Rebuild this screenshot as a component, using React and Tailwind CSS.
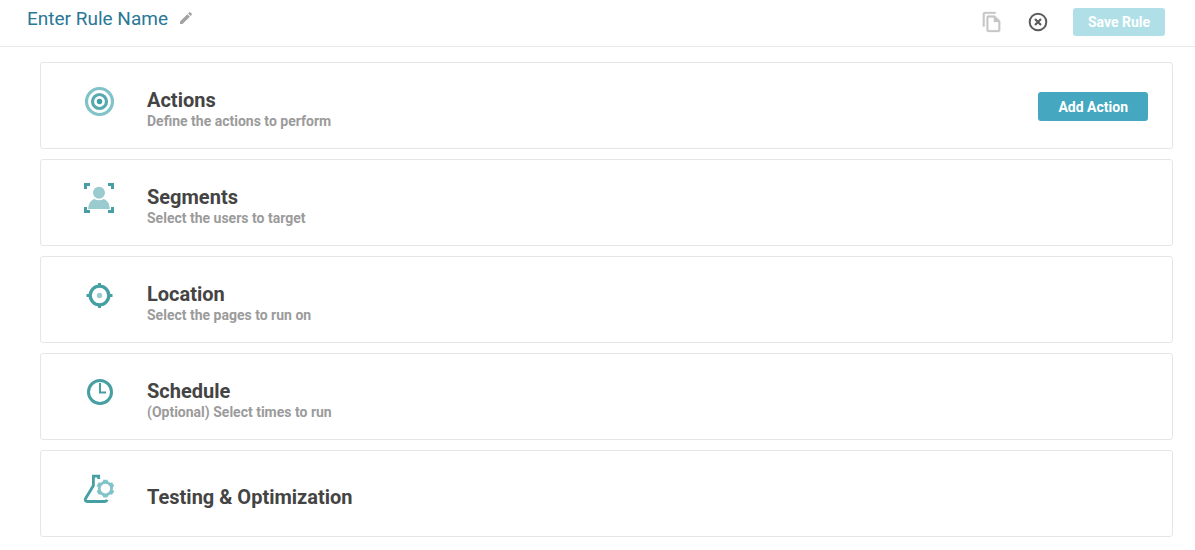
import React from "react";

function TargetIcon() {
  return (
    <svg width="32" height="32" viewBox="0 0 32 32" fill="none" aria-hidden="true">
      <circle cx="16.5" cy="15.5" r="13" stroke="#80c3c8" strokeWidth="3.2" />
      <circle cx="16.5" cy="15.5" r="7" stroke="#58aaaf" strokeWidth="3.2" />
      <circle cx="16.5" cy="15.5" r="2.7" fill="#3f9fa5" />
    </svg>
  );
}

function SegmentsIcon() {
  return (
    <svg width="32" height="32" viewBox="0 1 32 32" fill="none" aria-hidden="true">
      <path
        d="M1 1h6v3H4v3H1zM25 1h6v6h-3V4h-3zM1 25h3v3h3v3H1zM28 25h3v6h-6v-3h3z"
        fill="#459fa3"
      />
      <circle cx="16" cy="10.8" r="6" fill="#99cbcf" />
      <path d="M5.2 27c.3-6 2.800-8.900 6-10.100 3 1.800 6.600 1.800 9.600 0 3.200 1.200 5.700 4.100 6 10.100z" fill="#99cbcf" />
    </svg>
  );
}

function LocationIcon() {
  return (
    <svg width="32" height="32" viewBox="0 1 32 32" fill="none" aria-hidden="true">
      <circle cx="16.5" cy="16.5" r="9.300" stroke="#459fa3" strokeWidth="3.300" />
      <path d="M15 4h3v4h-3zM15 25h3v4h-3zM3.500 15h4v3h-4zM25.500 15h4v3h-4z" fill="#459fa3" />
      <circle cx="16.500" cy="16.500" r="2.700" fill="#99cbcf" />
    </svg>
  );
}

function ClockIcon() {
  return (
    <svg width="32" height="32" viewBox="0 1 32 32" fill="none" aria-hidden="true">
      <circle cx="17" cy="16" r="11.500" stroke="#459fa3" strokeWidth="3" />
      <path d="M17 7v9.500h6" stroke="#459fa3" strokeWidth="2" />
    </svg>
  );
}

function Gear() {
  return (
    <g fill="#80c3c8">
      <circle cx="22.400" cy="15.600" r="6.200" fill="none" stroke="#80c3c8" strokeWidth="2.700" />
      <path d="M19.700 9.600l.6-2.900h4.200l.6 2.900z" />
      <path d="M19.700 9.600l.6-2.900h4.200l.6 2.900z" transform="rotate(60 22.400 15.600)" />
      <path d="M19.700 9.600l.6-2.900h4.200l.6 2.900z" transform="rotate(120 22.400 15.600)" />
      <path d="M19.700 9.600l.6-2.900h4.200l.6 2.900z" transform="rotate(180 22.400 15.600)" />
      <path d="M19.700 9.600l.6-2.900h4.200l.6 2.900z" transform="rotate(240 22.400 15.600)" />
      <path d="M19.700 9.600l.6-2.900h4.200l.6 2.900z" transform="rotate(300 22.400 15.600)" />
    </g>
  );
}

function FlaskIcon() {
  return (
    <svg width="32" height="32" viewBox="0 1 32 32" fill="none" aria-hidden="true">
      <path
        d="M15.700 6V3.200H10.400V12.500L2.600 25.500C1.700 27.300 2.500 28.500 4.400 28.500H21.500C22.800 28.500 23.800 27.900 24.200 26.800"
        stroke="#459fa3"
        strokeWidth="2.800"
      />
      <Gear />
    </svg>
  );
}

const sections = [
  { title: "Actions", hint: "Define the actions to perform", Icon: TargetIcon, action: "Add Action" },
  { title: "Segments", hint: "Select the users to target", Icon: SegmentsIcon },
  { title: "Location", hint: "Select the pages to run on", Icon: LocationIcon },
  { title: "Schedule", hint: "(Optional) Select times to run", Icon: ClockIcon },
  { title: "Testing & Optimization", Icon: FlaskIcon },
];

function Section({ title, hint, Icon, action }) {
  return (
    <section className="flex min-h-[87px] items-center rounded-[3px] border border-[#e6e6e6] bg-white pr-6 pl-[42px]">
      <div className="mr-8 mb-2 shrink-0">
        <Icon />
      </div>
      <div className="pt-[6px]">
        <h2 className="text-[20px] leading-6 font-bold text-[#444444]">{title}</h2>
        {hint && <p className="text-[14px] leading-[18px] font-bold text-[#9b9b9b]">{hint}</p>}
      </div>
      {action && (
        <button
          type="button"
          className="mt-[2px] ml-auto h-[29px] rounded-[3px] bg-[#45a8c0] px-5 text-[14px] leading-5 font-bold text-white"
        >
          {action}
        </button>
      )}
    </section>
  );
}

export default function App() {
  return (
    <div className="min-h-screen bg-white font-['Roboto',sans-serif]">
      <header className="flex h-[47px] items-center border-b border-[#e9e9e9] pr-[30px] pb-[2px] pl-[27px]">
        <h1 className="pb-[6px] text-[19px] leading-6 text-[#2a7796]">Enter Rule Name</h1>
        <button type="button" aria-label="Edit rule name" className="ml-[10px] pb-2">
          <svg width="16" height="16" viewBox="0 0 24 24" fill="#a3a3a3" aria-hidden="true">
            <path d="M3 17.250V21h3.750L17.810 9.940l-3.750-3.750L3 17.250zM20.710 7.040a1 1 0 0 0 0-1.410l-2.340-2.340a1 1 0 0 0-1.410 0l-1.830 1.830 3.750 3.750 1.830-1.830z" />
          </svg>
        </button>
        <div className="ml-auto flex items-center">
          <button type="button" aria-label="Copy rule">
            <svg width="22" height="22" viewBox="0 0 24 24" fill="#c6c6c6" stroke="#c6c6c6" strokeWidth="0.3" aria-hidden="true">
              <path d="M16 1H4a2 2 0 0 0-2 2v14h2V3h12V1zm-1 4H8a2 2 0 0 0-2 2v14a2 2 0 0 0 2 2h11a2 2 0 0 0 2-2V11l-6-6zM8 21V7h6v5h5v9H8z" />
            </svg>
          </button>
          <button type="button" aria-label="Close" className="mr-6 ml-6">
            <svg width="22" height="22" viewBox="0 0 22 22" fill="none" stroke="#5c5c5c" aria-hidden="true">
              <circle cx="11" cy="11" r="8.300" strokeWidth="2" />
              <path d="M8 8l6 6M14 8l-6 6" strokeWidth="2.200" />
            </svg>
          </button>
          <button
            type="button"
            className="h-7 rounded-[3px] bg-[#b0dfe8] px-[15px] text-[14px] leading-5 font-bold text-white"
          >
            Save Rule
          </button>
        </div>
      </header>
      <main className="flex flex-col gap-[10px] pt-[15px] pr-[22px] pb-3 pl-10">
        {sections.map((section) => (
          <Section key={section.title} {...section} />
        ))}
      </main>
    </div>
  );
}
